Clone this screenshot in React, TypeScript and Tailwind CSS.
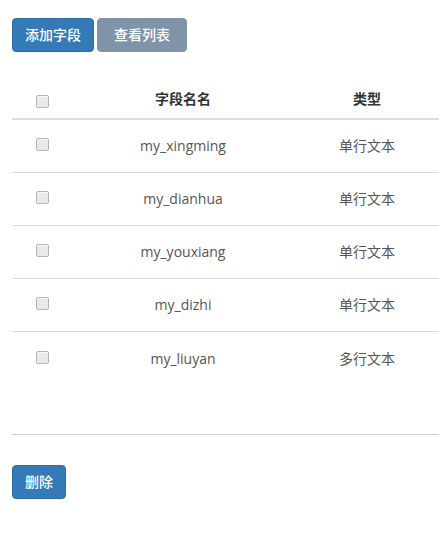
import React from "react";

const rows = [
  { name: "my_xingming", type: "单行文本" },
  { name: "my_dianhua", type: "单行文本" },
  { name: "my_youxiang", type: "单行文本" },
  { name: "my_dizhi", type: "单行文本" },
  { name: "my_liuyan", type: "多行文本" },
];

const font = { fontFamily: '"Open Sans", "Noto Sans CJK SC", sans-serif' };

function Box({ extra }: { extra: string }) {
  return (
    <input
      type="checkbox"
      className={
        "appearance-none w-[13px] h-[13px] m-0 border border-[#b5b5b5] rounded-[2px] bg-[#e9e9e9] shadow-[inset_0_1px_1px_rgba(255,255,255,0.8)] " +
        extra
      }
    />
  );
}

export default function App() {
  return (
    <div className="w-[439px] h-[543px] bg-white overflow-hidden pl-3 pt-[18px] text-[14px] text-[#333]" style={font}>
      <div className="flex gap-[3px]">
        <button className="h-[34px] px-3 rounded-[4px] bg-[#337ab7] border border-[#2e6da4] text-white text-[14px] font-medium leading-[20px]">
          添加字段
        </button>
        <button className="h-[34px] px-4 rounded-[4px] bg-[#7f93a9] border border-[#7f93a9] text-white text-[14px] font-medium leading-[20px]">
          查看列表
        </button>
      </div>

      <div className="mt-[30px] w-[428px]">
        <div className="flex h-[38px] border-b-2 border-[#dddddd] items-center pb-[2px]">
          <div className="w-[60px] flex justify-center">
            <Box extra="mt-[4px]" />
          </div>
          <div className="w-[222px] text-center font-bold text-[#333] leading-[20px]">字段名名</div>
          <div className="w-[146px] text-center font-bold text-[#333] leading-[20px]">类型</div>
        </div>
        {rows.map((r, i) => (
          <div
            key={r.name}
            className={
              "flex h-[53px] items-center text-[#555] " +
              (i < rows.length - 1 ? "border-b border-[#dddddd]" : "")
            }
          >
            <div className="w-[60px] flex justify-center">
              <Box extra="-mt-[3px]" />
            </div>
            <div className="w-[222px] text-center leading-[20px]">{r.name}</div>
            <div className="w-[146px] text-center leading-[20px] text-[14px]">{r.type}</div>
          </div>
        ))}
      </div>

      <div className="mt-[49px] h-px bg-[#cccccc] w-[427px]" />

      <button className="mt-[30px] h-[34px] px-3 rounded-[4px] bg-[#337ab7] border border-[#2e6da4] text-white text-[14px] font-medium leading-[20px]">
        删除
      </button>
    </div>
  );
}
